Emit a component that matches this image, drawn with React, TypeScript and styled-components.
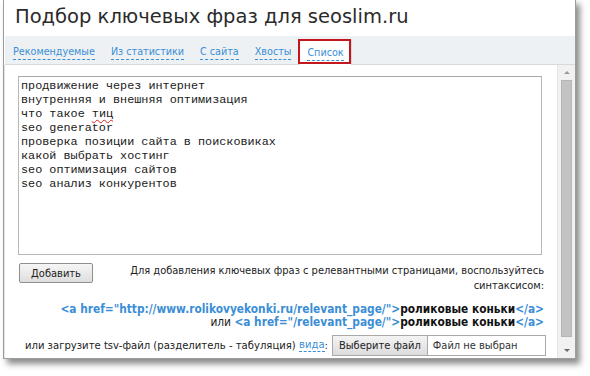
import React from 'react';
import styled, { createGlobalStyle } from 'styled-components';

const GlobalStyle = createGlobalStyle`
  html, body {
    margin: 0;
    padding: 0;
    background: #ffffff;
  }
  body {
    font-family: 'DejaVu Sans Condensed', 'DejaVu Sans', Verdana, sans-serif;
  }
`;

const Page = styled.div`
  width: 590px;
  height: 376px;
  padding-left: 3px;
  box-sizing: border-box;
  overflow: hidden;
`;

const Window = styled.div`
  width: 573px;
  height: 360px;
  margin-top: -1px;
  box-sizing: border-box;
  border: 1px solid #9c9c9c;
  background: #ffffff;
  box-shadow: 4px 5px 6px rgba(0, 0, 0, 0.45);
  display: flex;
  flex-direction: column;
`;

const Title = styled.h1`
  margin: 0;
  height: 36px;
  flex-shrink: 0;
  padding: 3px 0 0 11px;
  box-sizing: border-box;
  font-family: 'DejaVu Sans', Verdana, sans-serif;
  font-weight: normal;
  font-size: 19.5px;
  color: #2b2b2b;
  line-height: 28px;
`;

const TabBar = styled.div`
  height: 29px;
  flex-shrink: 0;
  margin-left: 1px;
  box-sizing: border-box;
  background: #eef1f3;
  border-bottom: 1px solid #d6dadd;
  display: flex;
  align-items: flex-end;
`;

const Tab = styled.div<{ $active?: boolean }>`
  position: relative;
  height: ${(p) => (p.$active ? '25px' : '24px')};
  margin-bottom: ${(p) => (p.$active ? '-1px' : '0')};
  padding: 0 7px;
  box-sizing: border-box;
  display: flex;
  align-items: center;
  background: ${(p) => (p.$active ? '#ffffff' : 'transparent')};
  border: 1px solid ${(p) => (p.$active ? '#d6dadd' : 'transparent')};
  border-bottom: none;

  ${(p) =>
    p.$active &&
    `
    &::after {
      content: '';
      position: absolute;
      left: -2px;
      top: -2px;
      right: 0px;
      bottom: 1px;
      border: 2px solid #c4161c;
    }
  `}
`;

const TabLink = styled.span`
  font-size: 10.7px;
  color: #3b8ed6;
  border-bottom: 1px dashed #3b8ed6;
  line-height: 13px;
  padding-bottom: 1px;
`;

const Body = styled.div`
  flex: 1;
  display: flex;
  min-height: 0;
`;

const Main = styled.div`
  flex: 1;
  padding: 11px 15px 0 13px;
  display: flex;
  flex-direction: column;
  border-left: 1px solid #e4e4e4;
`;

const Editor = styled.div`
  height: 179px;
  flex-shrink: 0;
  box-sizing: border-box;
  border: 1px solid #b8b8b8;
  border-top-color: #a8a8a8;
  padding: 2px 2px;
  font-family: 'Liberation Mono', 'Courier New', monospace;
  font-size: 11.8px;
  line-height: 14px;
  color: #1a1a1a;
  white-space: pre;
`;

const Misspelled = styled.span`
  text-decoration: underline wavy #e0201a;
  text-decoration-thickness: 1px;
  text-underline-offset: 2px;
`;

const ActionRow = styled.div`
  display: flex;
  justify-content: space-between;
  align-items: flex-start;
  margin-top: 8px;
`;

const Button = styled.button`
  font-family: 'DejaVu Sans Condensed', 'DejaVu Sans', Verdana, sans-serif;
  font-size: 11px;
  color: #222;
  width: 74px;
  height: 20px;
  padding: 0;
  margin-left: 1px;
  border: 1px solid #8e8e8e;
  border-radius: 2px;
  background: linear-gradient(to bottom, #f6f6f6, #dedede);
  cursor: pointer;
`;

const Help = styled.div`
  text-align: right;
  font-size: 11px;
  line-height: 15px;
  color: #222;
  width: 440px;
  margin-right: -2px;
`;

const Code = styled.div`
  margin-top: 10px;
  margin-right: -2px;
  text-align: right;
  font-size: 11.8px;
  line-height: 13px;
  font-weight: bold;
  white-space: nowrap;
`;

const Tag = styled.span`
  color: #3b8ed6;
`;

const Anchor = styled.span`
  color: #111;
`;

const Plain = styled.span`
  color: #222;
  font-weight: normal;
`;

const UploadRow = styled.div`
  margin-top: 6px;
  margin-right: -4px;
  display: flex;
  justify-content: flex-end;
  align-items: center;
  font-size: 11.2px;
  color: #222;
  white-space: nowrap;
`;

const Dashed = styled.span`
  color: #3b8ed6;
  border-bottom: 1px dashed #3b8ed6;
  line-height: 12px;
`;

const FileBox = styled.div`
  margin-left: 4px;
  width: 214px;
  height: 21px;
  box-sizing: border-box;
  border: 1px solid #a9a9a9;
  display: flex;
  align-items: stretch;
  background: #fff;
  font-size: 11px;
`;

const FileButton = styled.div`
  padding: 0 6px;
  display: flex;
  align-items: center;
  background: linear-gradient(to bottom, #f4f4f4, #dcdcdc);
  border-right: 1px solid #a9a9a9;
  color: #222;
`;

const FileName = styled.div`
  padding-left: 5px;
  display: flex;
  align-items: center;
  color: #333;
`;

const Scrollbar = styled.div`
  width: 17px;
  background: #f1f1f1;
  border-left: 1px solid #e6e6e6;
  display: flex;
  flex-direction: column;
  align-items: center;
`;

const Arrow = styled.div<{ $down?: boolean }>`
  height: 15px;
  display: flex;
  align-items: center;
  justify-content: center;
  &::before {
    content: '';
    border-left: 3px solid transparent;
    border-right: 3px solid transparent;
    ${(p) =>
      p.$down ? 'border-top: 3px solid #6a6a6a;' : 'border-bottom: 3px solid #9a9a9a;'}
  }
`;

const Thumb = styled.div`
  flex: 1;
  width: 11px;
  margin: 0 0 6px;
  background: #c3c3c3;
  border: 1px solid #b6b6b6;
  box-sizing: border-box;
`;

const tabs = ['Рекомендуемые', 'Из статистики', 'С сайта', 'Хвосты', 'Список'];

const lines = [
  'продвижение через интернет',
  'внутренняя и внешняя оптимизация',
];

const rest = [
  'seo generator',
  'проверка позиции сайта в поисковиках',
  'какой выбрать хостинг',
  'seo оптимизация сайтов',
  'seo анализ конкурентов',
];

export default function App() {
  return (
    <>
      <GlobalStyle />
      <Page>
        <Window>
          <Title>Подбор ключевых фраз для seoslim.ru</Title>
          <TabBar>
            {tabs.map((t, i) => (
              <Tab key={t} $active={i === tabs.length - 1}>
                <TabLink>{t}</TabLink>
              </Tab>
            ))}
          </TabBar>
          <Body>
            <Main>
              <Editor>
                {lines.join('\n')}
                {'\nчто такое '}
                <Misspelled>тиц</Misspelled>
                {'\n' + rest.join('\n')}
              </Editor>
              <ActionRow>
                <Button>Добавить</Button>
                <Help>
                  Для добавления ключевых фраз с релевантными страницами, воспользуйтесь синтаксисом:
                </Help>
              </ActionRow>
              <Code>
                <div>
                  <Tag>&lt;a href="http://www.rolikovyekonki.ru/relevant_page/"&gt;</Tag>
                  <Anchor>роликовые коньки</Anchor>
                  <Tag>&lt;/a&gt;</Tag>
                </div>
                <div>
                  <Plain>или </Plain>
                  <Tag>&lt;a href="/relevant_page/"&gt;</Tag>
                  <Anchor>роликовые коньки</Anchor>
                  <Tag>&lt;/a&gt;</Tag>
                </div>
              </Code>
              <UploadRow>
                <span>или загрузите tsv-файл (разделитель - табуляция)&nbsp;</span>
                <Dashed>вида</Dashed>
                <span>:</span>
                <FileBox>
                  <FileButton>Выберите файл</FileButton>
                  <FileName>Файл не выбран</FileName>
                </FileBox>
              </UploadRow>
            </Main>
            <Scrollbar>
              <Arrow />
              <Thumb />
              <Arrow $down />
            </Scrollbar>
          </Body>
        </Window>
      </Page>
    </>
  );
}
